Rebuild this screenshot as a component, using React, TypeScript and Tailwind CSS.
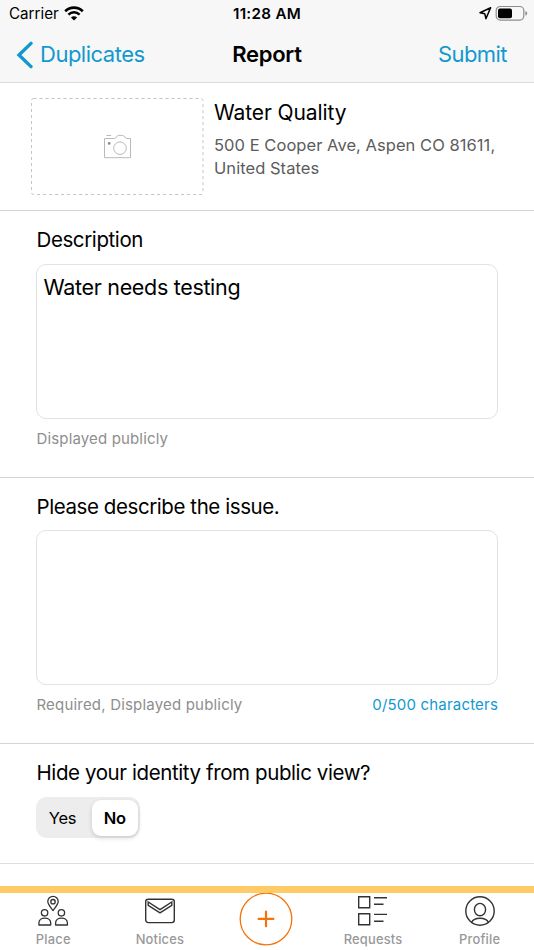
import type { ReactNode } from "react";

function StatusBar() {
  return (
    <div className="grid h-7 grid-cols-3 items-center text-[15.2px] leading-7">
      <div className="flex items-center pl-[9px]">
        <span>Carrier</span>
        <svg className="mb-[2px] ml-[5px]" width="20" height="15" viewBox="0 0 20 15" fill="none" stroke="#000">
          <path d="M1.2 5.2C6.2.4 13.800.4 18.800 5.200" strokeWidth="2.600" />
          <path d="M4.400 8.600c3.200-3 8-3 11.200 0" strokeWidth="2.500" />
          <path d="M10 14.600 6.900 11.400c1.800-1.600 4.400-1.600 6.200 0Z" fill="#000" stroke="none" />
        </svg>
      </div>
      <div className="text-center font-semibold tracking-[0.3px]">11:28 AM</div>
      <div className="flex items-center justify-end pr-[6px] pb-[2px]">
        <svg width="14" height="14" viewBox="0 0 14 14" fill="none" stroke="#000" strokeWidth="1.500" strokeLinejoin="round">
          <path d="M12.600 1.800 2 6.700l4.800 1.100 1.100 4.900Z" />
        </svg>
        <svg className="ml-[3px]" width="33" height="16" viewBox="0 0 33 16">
          <rect x="1.200" y="1.500" width="27.600" height="13.600" rx="4" fill="none" stroke="#8d8d8d" strokeWidth="1.200" />
          <rect x="3" y="3.400" width="14" height="9.800" rx="2" fill="#000" />
          <path d="M30.400 6c2.400.8 2.400 3.800 0 4.600Z" fill="#8d8d8d" />
        </svg>
      </div>
    </div>
  );
}

function NavBar() {
  return (
    <div className="grid h-[52px] grid-cols-3 items-center text-[22px] text-[#1199cf]">
      <div className="flex items-center pl-4">
        <svg className="mt-[2px]" width="18" height="28" viewBox="0 0 18 28" fill="none" stroke="#1199cf" strokeWidth="3.400" strokeLinecap="round">
          <path d="M15 2.400 3 14l12 11.600" strokeLinejoin="miter" />
        </svg>
        <span className="ml-[6px] tracking-[-0.5px]">Duplicates</span>
      </div>
      <div className="text-center font-semibold tracking-[-0.3px] text-black">Report</div>
      <div className="pr-[27px] text-right tracking-[-0.550px]">Submit</div>
    </div>
  );
}

function CameraIcon() {
  return (
    <svg width="28" height="26" viewBox="0 0 28 26" fill="none" stroke="#b9b9b9" strokeWidth="1">
      <path d="M.5 4.500h10.200c1.800-.2 1.800-3.100 4-3.100h3.800c2.200 0 2.200 2.900 4 3.100h4v19.200H.5Z" />
      <path d="M2.500 1.500h4.600" />
      <circle cx="16" cy="14.200" r="6.300" />
      <circle cx="5.200" cy="9.400" r="1.300" fill="#888" stroke="none" />
    </svg>
  );
}

function TabItem({ label, children }: { label: string; children: ReactNode }) {
  return (
    <div className="flex w-[106.600px] flex-col items-center">
      <div className="flex h-[39px] items-center pb-[3px]">{children}</div>
      <span className="text-[12.900px] leading-4 font-medium tracking-[0.2px] text-[#999]">{label}</span>
    </div>
  );
}

function TabBar() {
  return (
    <div className="flex h-16 border-t-[7px] border-[#ffcb66] bg-white">
      <TabItem label="Place">
        <svg width="32" height="32" viewBox="0 0 32 32" fill="none" stroke="#333" strokeWidth="1.300" strokeLinejoin="round">
          <path d="M16 15.500c-2.600-3.600-5.200-6.200-5.200-9a5.200 5.200 0 0 1 10.400 0c0 2.800-2.600 5.400-5.200 9Z" />
          <circle cx="16" cy="6.700" r="2.200" />
          <circle cx="7.600" cy="17.800" r="3.200" />
          <circle cx="24.400" cy="17.800" r="3.200" />
          <path d="M1.900 30v-2c0-6.500 11.800-6.500 11.800 0v2ZM18.600 30v-2c0-6.500 11.800-6.500 11.800 0v2Z" />
        </svg>
      </TabItem>
      <TabItem label="Notices">
        <svg width="32" height="28" viewBox="0 0 32 28" fill="none" stroke="#333" strokeWidth="1.400">
          <rect x="1.700" y="2.200" width="28.600" height="23.400" rx="2.500" />
          <path d="M4.200 5v3.300L16 15.900l11.800-7.600V5L16 12.600Z" />
        </svg>
      </TabItem>
      <div className="flex w-[106.600px] justify-center">
        <svg width="54" height="54" viewBox="0 0 54 54" fill="none" stroke="#f4740b">
          <circle cx="27" cy="26" r="25.800" strokeWidth="1.300" />
          <path d="M19.600 25.900h14.800M27 18.500v14.800" strokeWidth="2.200" strokeLinecap="round" />
        </svg>
      </div>
      <TabItem label="Requests">
        <svg width="32" height="32" viewBox="0 0 32 32" fill="none" stroke="#333" strokeWidth="1.400">
          <path d="M1.700 1.800h11v11h-11ZM1.700 18.700h11v11h-11ZM17 2.700h13M17 9.200h9.500M17 19.400h13M17 26.200h9.500" />
        </svg>
      </TabItem>
      <TabItem label="Profile">
        <svg width="32" height="32" viewBox="0 0 32 32" fill="none" stroke="#333" strokeWidth="1.400">
          <circle cx="16" cy="16" r="14.200" />
          <ellipse cx="16" cy="14.600" rx="5.600" ry="6.200" />
          <path d="M7.700 27.300c2.200-5.500 14.400-5.500 16.600 0" />
        </svg>
      </TabItem>
    </div>
  );
}

export default function App() {
  return (
    <div className="flex h-[950px] w-[534px] flex-col overflow-hidden bg-white font-['Inter',sans-serif] text-black">
      <header className="h-[83px] shrink-0 border-b border-[#dcdcdc] bg-[#f7f7f7]">
        <StatusBar />
        <NavBar />
      </header>

      <main className="flex flex-1 flex-col">
        <section className="flex h-32 border-b border-[#d4d4d4] pt-[15px] pl-[31px]">
          <div className="relative flex h-[97px] w-[173px] items-center justify-center">
            <svg className="absolute inset-0" width="173" height="97" fill="none">
              <rect x=".5" y=".5" width="171.500" height="96" rx="2" stroke="#c4c4c4" strokeDasharray="3 3" />
            </svg>
            <CameraIcon />
          </div>
          <div className="ml-[10px] pt-px">
            <h1 className="text-[21px] leading-7 tracking-[-0.1px]">Water Quality</h1>
            <p className="mt-[7px] text-[16.500px] leading-[23px] tracking-[0.050px] text-[#5c5c5c]">
              500 E Cooper Ave, Aspen CO 81611,
              <br />
              United States
            </p>
          </div>
        </section>

        <section className="h-[267px] border-b border-[#d4d4d4] px-9 pt-[15px]">
          <h2 className="pl-[0.500px] text-[20.500px] leading-7 tracking-[-0.400px]">Description</h2>
          <div className="mt-[10px] h-[155px] rounded-[10px] border border-[#e2e2e2] px-[6.500px] pt-[8px] text-[21.500px] leading-7 tracking-[-0.320px]">
            Water needs testing
          </div>
          <p className="mt-[10px] pl-[0.500px] text-[15px] leading-5 tracking-[0.150px] text-[#8e8e8e]">Displayed publicly</p>
        </section>

        <section className="h-[266px] border-b border-[#d4d4d4] px-9 pt-[15px]">
          <h2 className="pl-[0.500px] text-[20.500px] leading-7 tracking-[-0.420px]">Please describe the issue.</h2>
          <div className="mt-[9px] h-[155px] rounded-[10px] border border-[#e2e2e2]" />
          <div className="mt-[10px] flex justify-between pl-[0.500px] text-[15px] leading-5 tracking-[0.190px] text-[#8e8e8e]">
            <span>Required, Displayed publicly</span>
            <span className="text-[#1199cf]">0/500 characters</span>
          </div>
        </section>

        <section className="h-[120px] border-b border-[#dedede] px-9 pt-[15px]">
          <h2 className="pl-[0.500px] text-[20.500px] leading-7 tracking-[-0.400px]">Hide your identity from public view?</h2>
          <div className="mt-[10px] flex h-[41px] w-[104px] items-center rounded-[11px] bg-[#ededed] text-[16.500px]">
            <div className="w-[53px] pt-[2px] text-center tracking-[-0.200px]">Yes</div>
            <div className="ml-[2.500px] flex h-9 w-[46.500px] items-center justify-center rounded-[9px] bg-white pt-[2px] font-semibold tracking-[-0.200px] shadow-[0_2px_5px_rgba(0,0,0,0.15)]">
              No
            </div>
          </div>
        </section>
      </main>

      <TabBar />
    </div>
  );
}
